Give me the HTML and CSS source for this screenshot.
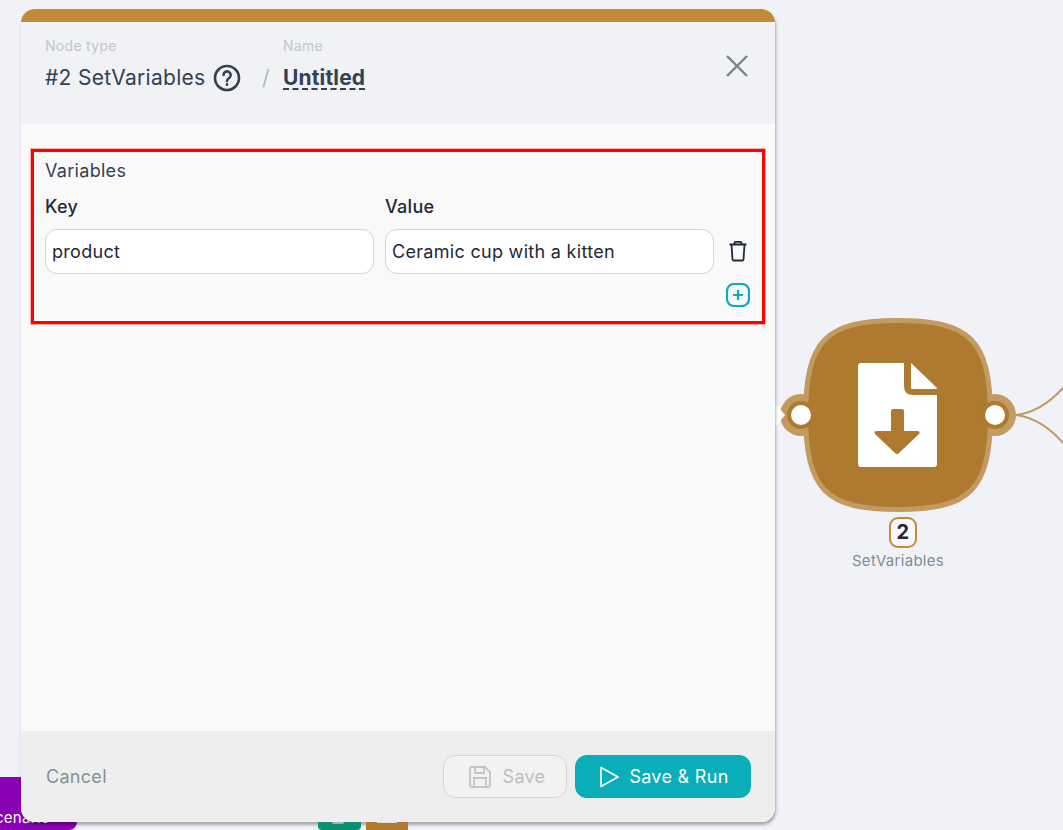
FILE: index.html
```html
<!DOCTYPE html>
<html lang="en">
<head>
<meta charset="utf-8">
<title>SetVariables</title>
<link rel="stylesheet" href="styles.css">
</head>
<body>
<main class="canvas">
  <div class="run-btn">Scenario</div>

  <svg class="node" width="1063" height="830" viewBox="0 0 1063 830" aria-hidden="true">
    <path class="wire" d="M1016 415C1035 413 1052 400 1063 388"/>
    <path class="wire" d="M1016 415C1035 417 1052 430 1063 443"/>
    <circle class="halo" cx="801" cy="415" r="21"/>
    <circle class="halo" cx="995" cy="415" r="21"/>
    <path class="white-fill" d="M775 403L785 415L775 427Z"/>
    <path class="body" d="M898 320.500C970 320.500 990 340 990.500 415C990 490 970 509.500 898 509.500C826 509.500 806 490 805.500 415C806 340 826 320.500 898 320.500Z"/>
    <circle class="core" cx="801" cy="415" r="14"/>
    <circle class="core" cx="995" cy="415" r="14"/>
    <circle class="white-fill" cx="801" cy="415" r="10"/>
    <circle class="white-fill" cx="995" cy="415" r="10"/>
    <path class="white-fill" fill-rule="evenodd" d="M861 363H904V386Q904 395 913 395H937V464Q937 467 934 467H861Q858 467 858 464V366Q858 363 861 363ZM893 409Q891 409 891 411V431H877Q873 431 875 434L895 453Q897 455 899 453L919 434Q921 431 917 431H904V411Q904 409 902 409Z"/>
    <path class="white-fill" d="M911 363L937 388Q937 389 936 389H912Q911 389 911 388Z"/>
  </svg>
  <div class="node-badge">2</div>
  <div class="node-label">SetVariables</div>

  <section class="panel">
    <div class="panel-strip"></div>
    <header class="panel-head">
      <div class="head-col type-col">
        <span class="head-label">Node type</span>
        <div class="head-title">
          <span>#2 SetVariables</span>
          <svg class="help" width="28" height="28" viewBox="0 0 28 28" aria-hidden="true">
            <circle cx="14" cy="14" r="12"/>
            <path d="M10.500 11a3.600 3.600 0 1 1 5.600 3c-1.400.9-2.100 1.500-2.100 3"/>
            <path d="M14 20.300v.4"/>
          </svg>
        </div>
      </div>
      <span class="slash">/</span>
      <div class="head-col">
        <span class="head-label">Name</span>
        <span class="head-name">Untitled</span>
      </div>
      <svg class="close" width="24" height="24" viewBox="0 0 24 24" aria-hidden="true">
        <path d="M2 2L22 22M22 2L2 22"/>
      </svg>
    </header>

    <div class="panel-body">
      <div class="var-box">
        <div class="var-title">Variables</div>
        <div class="var-grid">
          <div class="var-col">
            <label class="var-label">Key</label>
            <div class="text-field">product</div>
          </div>
          <div class="var-col">
            <label class="var-label">Value</label>
            <div class="text-field">Ceramic cup with a kitten</div>
          </div>
          <svg class="trash" width="24" height="24" viewBox="0 0 24 24" aria-hidden="true">
            <path d="M3.500 5.500H20.500M5.500 5.500L6.500 20.500Q6.600 21.500 7.500 21.500H16.500Q17.400 21.500 17.500 20.500L18.500 5.500M8.500 5.500V3.800Q8.500 2.800 9.500 2.800H14.500Q15.500 2.800 15.500 3.800V5.500"/>
          </svg>
        </div>
        <div class="add-row">
          <svg class="add" width="24" height="24" viewBox="0 0 24 24" aria-hidden="true">
            <rect x="1" y="1" width="22" height="22" rx="7"/>
            <path d="M12 7V17M7 12H17"/>
          </svg>
        </div>
      </div>
    </div>

    <footer class="panel-foot">
      <span class="cancel">Cancel</span>
      <div class="foot-actions">
        <button class="btn btn-save" type="button">
          <svg width="22" height="22" viewBox="0 0 22 22" aria-hidden="true">
            <path d="M1 3Q1 1 3 1H16L21 6V19Q21 21 19 21H3Q1 21 1 19ZM6 1V7H15V1M5 21V12H17V21"/>
          </svg>
          Save
        </button>
        <button class="btn btn-run" type="button">
          <svg width="20" height="22" viewBox="0 0 20 22" aria-hidden="true">
            <path d="M2 1.500V20.500L19 11Z"/>
          </svg>
          Save &amp; Run
        </button>
      </div>
    </footer>
  </section>

  <div class="chip chip-green"></div>
  <div class="chip chip-brown"></div>
</main>
</body>
</html>
```
FILE: styles.css
```css
* { box-sizing: border-box; }
html, body { margin: 0; padding: 0; }
body {
  width: 1063px;
  height: 830px;
  overflow: hidden;
  background: #f0f2f7;
  font-family: Inter, "Noto Sans", sans-serif;
  letter-spacing: .3px;
  color: #1f2937;
}
.canvas { position: relative; width: 1063px; height: 830px; overflow: hidden; }

.run-btn {
  position: absolute; left: -56px; top: 777px; width: 133px; height: 53px;
  padding: 31px 0 0 41px;
  background: #8a00b3; color: #fff; font-size: 15px; line-height: 20px;
  border-radius: 0 0 8px 8px;
}
.chip { position: absolute; top: 822px; height: 8px; }
.chip-green { left: 318px; width: 43px; background: #0e8f72; border-radius: 0 0 4px 4px; }
.chip-green::after {
  content: ""; position: absolute; left: 14px; top: 0; width: 12px; height: 2px;
  background: #9fb8ae; border-radius: 0 0 6px 6px;
}
.chip-brown { left: 366px; width: 42px; background: #ad7a2f; }
.chip-brown::after {
  content: ""; position: absolute; left: 11px; top: 0; width: 20px; height: 1px;
  background: #dcdcdc;
}

.node { position: absolute; left: 0; top: 0; }
.wire { fill: none; stroke: #c39b60; stroke-width: 2; }
.white-fill { fill: #fff; }
.halo { fill: #c39b60; }
.body { fill: #ad7a2f; stroke: #c39b60; stroke-width: 5; }
.core { fill: #ad7a2f; }
.node-badge {
  position: absolute; left: 889px; top: 517px; width: 28px; height: 31px;
  border: 2px solid #c28a3a; border-radius: 9px;
  background: #f8f8f8;
  font-size: 20px; font-weight: 700; line-height: 27px; text-align: center; color: #1f2937;
}
.node-label {
  position: absolute; left: 798px; top: 551px; width: 200px;
  text-align: center; font-size: 15px; line-height: 20px; color: #7f8d94;
}

.panel {
  position: absolute; left: 21px; top: 9px; width: 754px; height: 813px;
  display: flex; flex-direction: column;
  border-radius: 14px; overflow: hidden;
  box-shadow: 1px 3px 3px rgba(0, 0, 0, .3);
  background: #f9f9f9;
}
.panel-strip { height: 13px; background: #c18a38; flex: none; }
.panel-head {
  flex: none; height: 102px; background: #f0f2f5;
  display: flex; align-items: flex-start; padding: 15px 26px 0 24px;
}
.head-col { display: flex; flex-direction: column; gap: 9px; }
.type-col { width: 217px; }
.head-label { font-size: 14px; line-height: 18px; color: #c4c6c9; }
.head-title { display: flex; align-items: center; gap: 7px; font-size: 21px; line-height: 28px; color: #334155; white-space: nowrap; }
.help { fill: none; stroke: #334155; stroke-width: 2.600; stroke-linecap: round; flex: none; }
.slash { width: 21px; margin-top: 27px; font-size: 21px; line-height: 28px; color: #b4b8bd; }
.head-name {
  font-size: 21px; line-height: 28px; font-weight: 700; letter-spacing: .15px; color: #334155;
  text-decoration: underline dashed #334155 2px; text-underline-offset: 3px;
}
.close { margin-left: auto; margin-top: 17px; fill: none; stroke: #7a8489; stroke-width: 2.400; flex: none; }

.panel-body { flex: 1; padding: 25px 10px 0; background: #f9f9f9; }
.var-box {
  height: 175px; border: 3px solid #ff0000;
  box-shadow: 0 0 0 1px rgba(255, 0, 0, .3);
  padding: 9px 11px 0;
}
.var-title { font-size: 18px; line-height: 20px; color: #334155; }
.var-grid { display: flex; align-items: flex-end; gap: 11px; margin-top: 16px; }
.var-col { width: 329px; flex: none; display: flex; flex-direction: column; gap: 12px; }
.var-label { font-size: 18px; line-height: 20px; font-weight: 500; color: #1f2937; }
.text-field {
  height: 45px; background: #fff; border: 1px solid #d2d4d7; border-radius: 12px;
  padding: 0 6px; font-size: 18px; line-height: 43px; color: #1f2937;
}
.trash { flex: none; margin: 0 0 11px 1px; fill: none; stroke: #1f2937; stroke-width: 1.800; stroke-linejoin: round; }
.add-row { display: flex; justify-content: flex-end; margin-top: 9px; padding-right: 1px; }
.add { fill: none; stroke: #09aeb9; stroke-width: 2.200; flex: none; }

.panel-foot {
  flex: none; height: 91px; background: #eeeeee;
  display: flex; align-items: center; justify-content: space-between;
  padding: 0 24px 0 25px;
}
.cancel { font-size: 18px; color: #7f939b; }
.foot-actions { display: flex; gap: 8px; }
.btn {
  display: flex; align-items: center; justify-content: center;
  height: 43px; border-radius: 12px; font: inherit; font-size: 18px; letter-spacing: .3px;
}
.btn-save {
  width: 124px; gap: 12px; padding: 0 0 0 4px; background: #f2f2f2; border: 1px solid #d6d6d6; color: #bdbdbd;
}
.btn-save svg { fill: none; stroke: #c4c4c4; stroke-width: 1.800; }
.btn-run { width: 176px; gap: 10px; padding: 0 0 0 2px; background: #09aeb9; border: 0; color: #fff; }
.btn-run svg { fill: none; stroke: #fff; stroke-width: 1.600; stroke-linejoin: round; }
```
